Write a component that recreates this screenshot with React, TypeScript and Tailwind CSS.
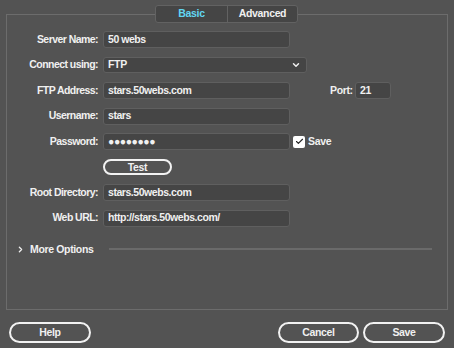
import { ChevronDown, ChevronRight, Check } from "lucide-react"

// 表单行
function Row({ label, children }: { label: string; children: React.ReactNode }) {
  return (
    <div className="flex h-[17px] items-center">
      <div className="w-[92px] pr-[1px] text-right tracking-[-0.55px]">{label}</div>
      <div className="ml-[4px] flex items-center">{children}</div>
    </div>
  )
}

function Field({ value, w = "w-[187px]" }: { value: string; w?: string }) {
  return (
    <div className={`flex h-[17px] items-center rounded-[3px] border border-[#5f5f5f] bg-[#454545] pl-[4px] tracking-[-0.45px] ${w}`}>
      {value}
    </div>
  )
}

export default function App() {
  return (
    <div
      className="relative h-[348px] w-[454px] overflow-hidden bg-[#535353] text-[10.5px] font-bold tracking-[-0.35px] text-[#f0f0f0]"
      style={{ fontFamily: '"Liberation Sans", Arial, sans-serif' }}
    >
      {/* 主面板 */}
      <div className="ml-[6px] mt-[14px] h-[296px] w-[442px] border border-[#6c6c6c] pt-[16px]">
        <div className="flex flex-col gap-[8.5px]">
          <Row label="Server Name:">
            <Field value="50 webs" />
          </Row>
          <Row label="Connect using:">
            <div className="flex h-[16px] w-[204px] items-center justify-between rounded-[3px] border border-[#5f5f5f] bg-[#454545] pl-[4px] pr-[5px]">
              FTP
              <ChevronDown size={10} strokeWidth={3.5} />
            </div>
          </Row>
          <div className="flex h-[17px] items-center">
            <div className="w-[92px] pr-[1px] text-right tracking-[-0.55px]">FTP Address:</div>
            <div className="ml-[4px]">
              <Field value="stars.50webs.com" />
            </div>
            <div className="ml-[40px] w-[22px]">Port:</div>
            <div className="ml-[3px]">
              <Field value="21" w="w-[36px]" />
            </div>
          </div>
          <Row label="Username:">
            <Field value="stars" />
          </Row>
          <Row label="Password:">
            <Field value="●●●●●●●●" />
            <div className="ml-[3px] flex h-[12px] w-[12px] items-center justify-center rounded-[2px] bg-white text-[#222]">
              <Check size={9} strokeWidth={3} />
            </div>
            <span className="ml-[3px]">Save</span>
          </Row>
          <div className="flex h-[17px] items-center pl-[96px]">
            <button className="h-[16px] w-[69px] rounded-full border-2 border-[#f2f2f2] leading-[12px]">Test</button>
          </div>
          <Row label="Root Directory:">
            <Field value="stars.50webs.com" />
          </Row>
          <Row label="Web URL:">
            <Field value="http://stars.50webs.com/" />
          </Row>
        </div>

        {/* 更多选项 */}
        <div className="mt-[15px] flex items-center pl-[9px] pr-[15px]">
          <ChevronRight size={9} strokeWidth={3.5} />
          <span className="ml-[5px]">More Options</span>
          <div className="ml-[16px] h-[2px] flex-1 bg-[#6a6a6a]" />
        </div>
      </div>

      {/* 选项卡 */}
      <div className="absolute left-[155px] top-[5px] flex h-[18px] w-[143px] overflow-hidden rounded-[3px] border border-[#626262] bg-[#454545]">
        <div className="flex w-[72px] items-center justify-center border-r border-[#626262] text-[#62d6f2]">Basic</div>
        <div className="flex flex-1 items-center justify-center">Advanced</div>
      </div>

      {/* 底部按钮 */}
      <div className="mt-[12px] flex px-[9px]">
        <button className="h-[21px] w-[82px] rounded-full border-2 border-[#f2f2f2]">Help</button>
        <button className="ml-auto h-[21px] w-[81px] rounded-full border-2 border-[#f2f2f2]">Cancel</button>
        <button className="ml-[4px] h-[21px] w-[82px] rounded-full border-2 border-[#f2f2f2]">Save</button>
      </div>
    </div>
  )
}
